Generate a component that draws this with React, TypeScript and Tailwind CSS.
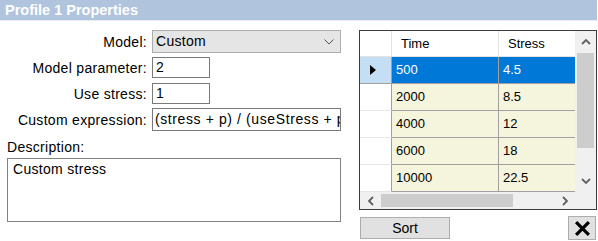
const rows = [
  { time: "500", stress: "4.5" },
  { time: "2000", stress: "8.5" },
  { time: "4000", stress: "12" },
  { time: "6000", stress: "18" },
  { time: "10000", stress: "22.5" },
];

function Chevron({ dir }: { dir: "up" | "down" | "left" | "right" }) {
  const d =
    dir === "up"
      ? "M1 6 L5 2 L9 6"
      : dir === "down"
        ? "M1 2 L5 6 L9 2"
        : dir === "left"
          ? "M6 1 L2 5 L6 9"
          : "M2 1 L6 5 L2 9";
  const box = dir === "up" || dir === "down" ? "0 0 10 8" : "0 0 8 10";
  return (
    <svg
      viewBox={box}
      className={dir === "up" || dir === "down" ? "h-[8px] w-[10px]" : "h-[10px] w-[8px]"}
    >
      <path d={d} fill="none" stroke="#606060" strokeWidth="1.8" />
    </svg>
  );
}

function Label({ children }: { children: string }) {
  return <div className="w-[147px] shrink-0 text-right leading-[16px]">{children}</div>;
}

export default function App() {
  return (
    <div className="h-[241px] w-[598px] overflow-hidden bg-white font-['Liberation_Sans',Arial,sans-serif] text-[14px] text-black">
      <div className="mr-[1px] h-[20px] bg-[#b0c4de] pl-[5px] text-[14.5px] font-bold leading-[20px] text-white">
        Profile 1 Properties
      </div>
      <div className="h-[1px] bg-[#e8eef6]" />

      <div className="flex pt-[9px]">
        {/* left form */}
        <div className="flex w-[341px] flex-col tracking-[0.3px]">
          <div className="flex items-center">
            <Label>Model:</Label>
            <div className="ml-[5px] flex h-[23px] w-[189px] items-center justify-between border border-[#adadad] bg-[#e5e5e5] pl-[3px] pr-[6px]">
              <span>Custom</span>
              <svg viewBox="0 0 10 6" className="h-[6px] w-[10px]">
                <path d="M0.5 0.5 L5 5 L9.5 0.5" fill="none" stroke="#555" strokeWidth="1" />
              </svg>
            </div>
          </div>
          <div className="mt-[4px] flex items-center">
            <Label>Model parameter:</Label>
            <div className="ml-[5px] h-[21px] w-[58px] border border-[#7a7a7a] pl-[3px] leading-[19px]">2</div>
          </div>
          <div className="mt-[5px] flex items-center">
            <Label>Use stress:</Label>
            <div className="ml-[5px] h-[21px] w-[58px] border border-[#7a7a7a] pl-[3px] leading-[19px]">1</div>
          </div>
          <div className="mt-[4px] flex items-center">
            <Label>Custom expression:</Label>
            <div className="ml-[5px] h-[23px] w-[189px] overflow-hidden whitespace-nowrap border border-[#7a7a7a] pl-[2px] leading-[21px] tracking-[0.6px]">
              (stress + p) / (useStress + p)
            </div>
          </div>
          <div className="ml-[7px] mt-[8px] leading-[16px]">Description:</div>
          <div className="ml-[7px] mt-[3px] h-[64px] w-[334px] border border-[#828282] px-[5px] pt-[2px] leading-[16px]">
            Custom stress
          </div>
        </div>

        {/* right grid */}
        <div className="ml-[18px] flex flex-col">
          <div className="flex h-[180px] w-[238px] flex-col border border-[#3c3c3c] text-[13px]">
            <div className="flex h-[161px]">
              <div className="flex w-[215px] flex-col">
                <div className="flex h-[26px] border-b border-[#e3e3e3] bg-white">
                  <div className="w-[32px] border-r border-[#e3e3e3]" />
                  <div className="w-[107px] border-r border-[#e3e3e3] pl-[9px] leading-[26px]">Time</div>
                  <div className="w-[76px] pl-[9px] leading-[26px]">Stress</div>
                </div>
                {rows.map((r, i) => {
                  const sel = i === 0;
                  return (
                    <div key={r.time} className="flex h-[27px]">
                      <div
                        className={`flex w-[32px] items-center border-b border-r pl-[10px] ${
                          sel ? "border-[#a0a0a0] bg-[#c4dff5]" : "border-b-[#e6e6e6] border-r-[#a0a0a0] bg-white"
                        }`}
                      >
                        {sel && (
                          <svg viewBox="0 0 6 10" className="h-[10px] w-[6px]">
                            <path d="M0 0 L6 5 L0 10 Z" fill="#000" />
                          </svg>
                        )}
                      </div>
                      <div
                        className={`w-[107px] border-b border-r border-[#a0a0a0] pl-[4px] leading-[26px] ${
                          sel ? "bg-[#0078d7] text-white" : "bg-[#f5f4dc]"
                        }`}
                      >
                        {r.time}
                      </div>
                      <div
                        className={`w-[76px] border-b border-[#a0a0a0] pl-[4px] leading-[26px] ${
                          sel ? "bg-[#0078d7] text-white" : "bg-[#f5f4dc]"
                        }`}
                      >
                        {r.stress}
                      </div>
                    </div>
                  );
                })}
              </div>
              {/* vertical scrollbar */}
              <div className="flex w-[21px] flex-col bg-[#f0f0f0]">
                <div className="flex h-[22px] items-center justify-center">
                  <Chevron dir="up" />
                </div>
                <div className="mx-[2px] h-[95px] bg-[#cdcdcd]" />
                <div className="flex-1" />
                <div className="flex h-[22px] items-center justify-center">
                  <Chevron dir="down" />
                </div>
              </div>
            </div>
            {/* horizontal scrollbar */}
            <div className="flex h-[17px] bg-[#f0f0f0]">
              <div className="flex w-[21px] items-center justify-center">
                <Chevron dir="left" />
              </div>
              <div className="my-[2px] w-[132px] bg-[#cdcdcd]" />
              <div className="flex-1" />
              <div className="flex w-[21px] items-center justify-center">
                <Chevron dir="right" />
              </div>
              <div className="w-[21px]" />
            </div>
          </div>

          <div className="mt-[6px] flex items-start justify-between">
            <div className="ml-[1px] mt-[1px] flex h-[22px] w-[90px] items-center justify-center border border-[#adadad] bg-[#e1e1e1] text-[14px]">
              Sort
            </div>
            <div className="mr-[1px] flex h-[24px] w-[28px] items-center justify-center border border-[#adadad] bg-[#e1e1e1]">
              <svg viewBox="0 0 16 16" className="h-[17px] w-[17px]">
                <path d="M2 2 L14 14 M14 2 L2 14" stroke="#000" strokeWidth="3" />
              </svg>
            </div>
          </div>
        </div>
      </div>
    </div>
  );
}
